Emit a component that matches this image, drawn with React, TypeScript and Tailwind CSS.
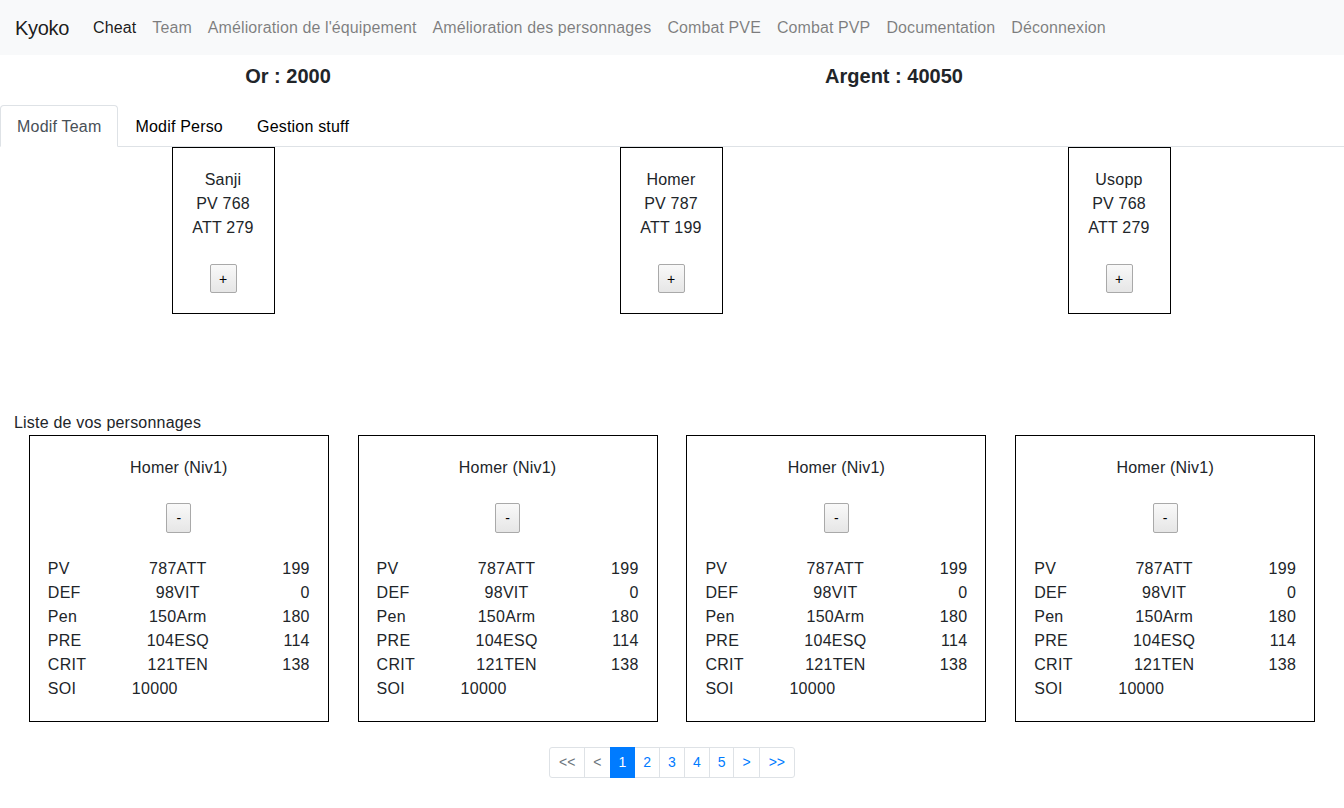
import React from 'react'

const navLinks = [
  'Team',
  "Amélioration de l'équipement",
  'Amélioration des personnages',
  'Combat PVE',
  'Combat PVP',
  'Documentation',
  'Déconnexion',
]

const team = [
  { name: 'Sanji', pv: 768, att: 279 },
  { name: 'Homer', pv: 787, att: 199 },
  { name: 'Usopp', pv: 768, att: 279 },
]

const stats = [
  ['PV', '787ATT', '199'],
  ['DEF', '98VIT', '0'],
  ['Pen', '150Arm', '180'],
  ['PRE', '104ESQ', '114'],
  ['CRIT', '121TEN', '138'],
]

function MacButton({ children, wide }: { children: React.ReactNode; wide?: boolean }) {
  return (
    <button
      className={
        'flex items-center justify-center border border-[#a9a9a9] rounded-[2px] bg-linear-to-b from-[#f9f9f9] to-[#e6e6e6] text-[14px] text-black leading-none ' +
        (wide ? 'w-[27px] h-[29px]' : 'w-[25px] h-[30px]')
      }
    >
      {children}
    </button>
  )
}

function TeamCard({ name, pv, att }: { name: string; pv: number; att: number }) {
  return (
    <div className="w-[103px] border border-black pt-5 pb-5 flex flex-col items-center">
      <div className="text-center leading-6 tracking-[0.2px]">
        <div>{name}</div>
        <div>PV {pv}</div>
        <div>ATT {att}</div>
      </div>
      <div className="mt-6">
        <MacButton wide>+</MacButton>
      </div>
    </div>
  )
}

function PersoCard() {
  return (
    <div className="w-[300px] border border-black px-[18px] pt-5 pb-5">
      <div className="text-center leading-6 tracking-[0.2px]">Homer (Niv1)</div>
      <div className="flex justify-center mt-[23px]">
        <MacButton>-</MacButton>
      </div>
      <div className="mt-6 leading-6 tracking-[0.3px]">
        {stats.map(([a, b, c]) => (
          <div key={a} className="grid grid-cols-3">
            <div>{a}</div>
            <div className="text-center pr-[2px]">{b}</div>
            <div className="text-right">{c}</div>
          </div>
        ))}
        <div className="flex">
          <div className="w-[84px]">SOI</div>
          <div>10000</div>
        </div>
      </div>
    </div>
  )
}

export default function App() {
  const pages = ['<<', '<', '1', '2', '3', '4', '5', '>', '>>']

  return (
    <div className="min-h-[808px] bg-white text-[#212529] text-base font-['Liberation_Sans',Arial,sans-serif]">
      <nav className="h-[55px] bg-[#f8f9fa] flex items-center px-4">
        <span className="text-[20px] text-black/90 mr-4 ml-[-1px] tracking-[-0.3px]">Kyoko</span>
        <span className="px-2 text-black/90 tracking-[0.1px]">Cheat</span>
        {navLinks.map((l) => (
          <span key={l} className="px-2 text-black/50 tracking-[0.1px]">
            {l}
          </span>
        ))}
      </nav>

      <div className="grid grid-cols-[576px_636px] pt-[9px] h-[50px]">
        <div className="text-center text-[20px] font-semibold leading-6">Or : 2000</div>
        <div className="text-center text-[20px] font-semibold leading-6">Argent : 40050</div>
      </div>

      <div className="flex border-b border-[#dee2e6] h-[42px] tracking-[0.2px]">
        <div className="px-4 pt-[9px] pb-[7px] border border-[#dee2e6] border-b-white rounded-t-[4px] bg-white text-[#495057] -mb-px leading-6">
          Modif Team
        </div>
        <div className="px-4 pt-[9px] pb-[7px] border border-transparent leading-6 text-black">Modif Perso</div>
        <div className="px-4 pt-[9px] pb-[7px] border border-transparent leading-6 text-black">Gestion stuff</div>
      </div>

      <div className="grid grid-cols-3">
        {team.map((t) => (
          <div key={t.name} className="flex justify-center pr-[2px]">
            <TeamCard {...t} />
          </div>
        ))}
      </div>

      <div className="mt-[97px] px-[14px] leading-6 tracking-[0.2px]">Liste de vos personnages</div>

      <div className="flex justify-evenly">
        <PersoCard />
        <PersoCard />
        <PersoCard />
        <PersoCard />
      </div>

      <div className="flex justify-center mt-[25px]">
        <div className="flex text-sm leading-[21px]">
          {pages.map((p, i) => {
            const active = p === '1'
            const muted = p === '<<' || p === '<'
            return (
              <div
                key={p}
                className={
                  'py-1 border ' +
                  (p.length > 1 ? 'px-[9px] ' : 'px-2 ') +
                  (i > 0 ? '-ml-px ' : '') +
                  (i === 0 ? 'rounded-l-[3px] ' : '') +
                  (i === pages.length - 1 ? 'rounded-r-[3px] ' : '') +
                  (active
                    ? 'bg-[#007bff] border-[#007bff] text-white relative z-10'
                    : muted
                      ? 'border-[#dee2e6] text-[#6c757d] bg-white'
                      : 'border-[#dee2e6] text-[#007bff] bg-white')
                }
              >
                {p}
              </div>
            )
          })}
        </div>
      </div>
    </div>
  )
}
